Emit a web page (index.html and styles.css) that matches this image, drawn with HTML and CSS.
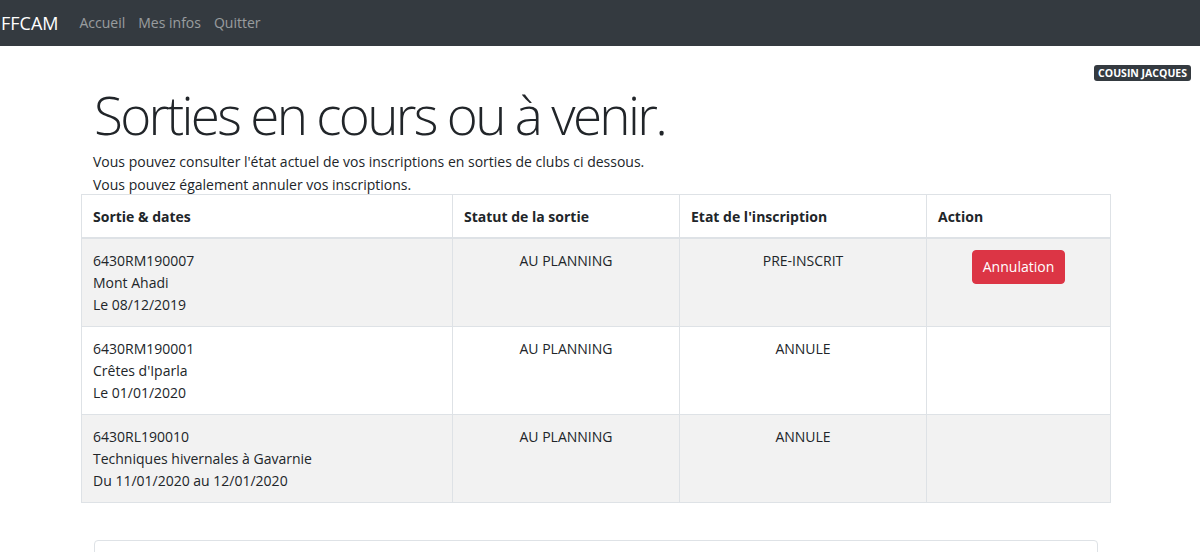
FILE: index.html
```html
<!DOCTYPE html>
<html lang="fr">
<head>
<meta charset="utf-8">
<title>FFCAM - Sorties</title>
<link rel="stylesheet" href="styles.css">
</head>
<body>
<nav class="navbar">
  <a class="brand" href="#">FFCAM</a>
  <ul class="nav-links">
    <li><a href="#">Accueil</a></li>
    <li><a href="#">Mes infos</a></li>
    <li><a href="#">Quitter</a></li>
  </ul>
</nav>
<div class="user-row"><span class="badge">COUSIN JACQUES</span></div>
<main class="container">
  <div class="intro">
    <h1 class="display">Sorties en cours ou à venir.</h1>
    <p class="lead-text">Vous pouvez consulter l'état actuel de vos inscriptions en sorties de clubs ci dessous.<br>Vous pouvez également annuler vos inscriptions.</p>
  </div>
  <table class="table">
    <thead>
      <tr>
        <th class="c1">Sortie &amp; dates</th>
        <th class="c2">Statut de la sortie</th>
        <th class="c3">Etat de l'inscription</th>
        <th class="c4">Action</th>
      </tr>
    </thead>
    <tbody>
      <tr class="striped">
        <td>6430RM190007<br>Mont Ahadi<br>Le 08/12/2019</td>
        <td class="center">AU PLANNING</td>
        <td class="center">PRE-INSCRIT</td>
        <td class="center"><button class="btn-danger" type="button">Annulation</button></td>
      </tr>
      <tr>
        <td>6430RM190001<br>Crêtes d'Iparla<br>Le 01/01/2020</td>
        <td class="center">AU PLANNING</td>
        <td class="center">ANNULE</td>
        <td class="center"></td>
      </tr>
      <tr class="striped">
        <td>6430RL190010<br>Techniques hivernales à Gavarnie<br>Du 11/01/2020 au 12/01/2020</td>
        <td class="center">AU PLANNING</td>
        <td class="center">ANNULE</td>
        <td class="center"></td>
      </tr>
    </tbody>
  </table>
  <div class="card"></div>
</main>
</body>
</html>
```
FILE: styles.css
```css
* { box-sizing: border-box; }
html, body { margin: 0; padding: 0; }
body {
  font-family: "Open Sans", "Noto Sans", sans-serif;
  font-size: 14px;
  line-height: 22px;
  color: #212529;
  background: #fff;
  overflow: hidden;
}
.navbar {
  height: 46px;
  background: #343a40;
  display: flex;
  align-items: center;
  padding: 0 0 0 1px;
}
.brand {
  color: #fff;
  font-size: 18px;
  text-decoration: none;
  margin-right: 21px;
}
.nav-links {
  list-style: none;
  display: flex;
  gap: 13px;
  margin: 0;
  padding: 0;
}
.nav-links a {
  color: rgba(255,255,255,0.5);
  text-decoration: none;
  font-size: 14px;
}
.user-row {
  display: flex;
  justify-content: flex-end;
  padding: 19px 9px 0 0;
}
.badge {
  background: #343a40;
  color: #fff;
  font-size: 10.5px;
  font-weight: 700;
  line-height: 16px;
  padding: 0 4px;
  border-radius: 3px;
}
.container {
  margin-left: 81px;
  width: 1030px;
}
.intro { padding: 0 12px; }
.display {
  font-size: 53px;
  font-weight: 300;
  letter-spacing: -2.7px;
  line-height: 64px;
  margin: 2px 0 0 1px;
}
.lead-text {
  margin: 3px 0 -2px;
  line-height: 23px;
}
.table {
  width: 100%;
  border-collapse: collapse;
  table-layout: fixed;
  margin-top: 0;
}
.table th, .table td {
  border: 1px solid #dee2e6;
  padding: 11px 11px 10px;
  vertical-align: top;
  text-align: left;
}
.table th { font-weight: 700; padding-bottom: 9px; }
.table thead th { border-bottom: 2px solid #dee2e6; }
.c1 { width: 371px; }
.c2 { width: 227px; }
.c3 { width: 247px; }
.table td.center { text-align: center; }
.striped td { background: #f2f2f2; }
.btn-danger {
  background: #dc3545;
  color: #fff;
  border: 1px solid #dc3545;
  border-radius: 4px;
  font-family: inherit;
  font-size: 14px;
  line-height: 22px;
  padding: 5px 10px;
  cursor: pointer;
}
.card {
  margin: 37px 13px 0;
  height: 40px;
  border: 1px solid #dee2e6;
  border-radius: 4px;
}
```
